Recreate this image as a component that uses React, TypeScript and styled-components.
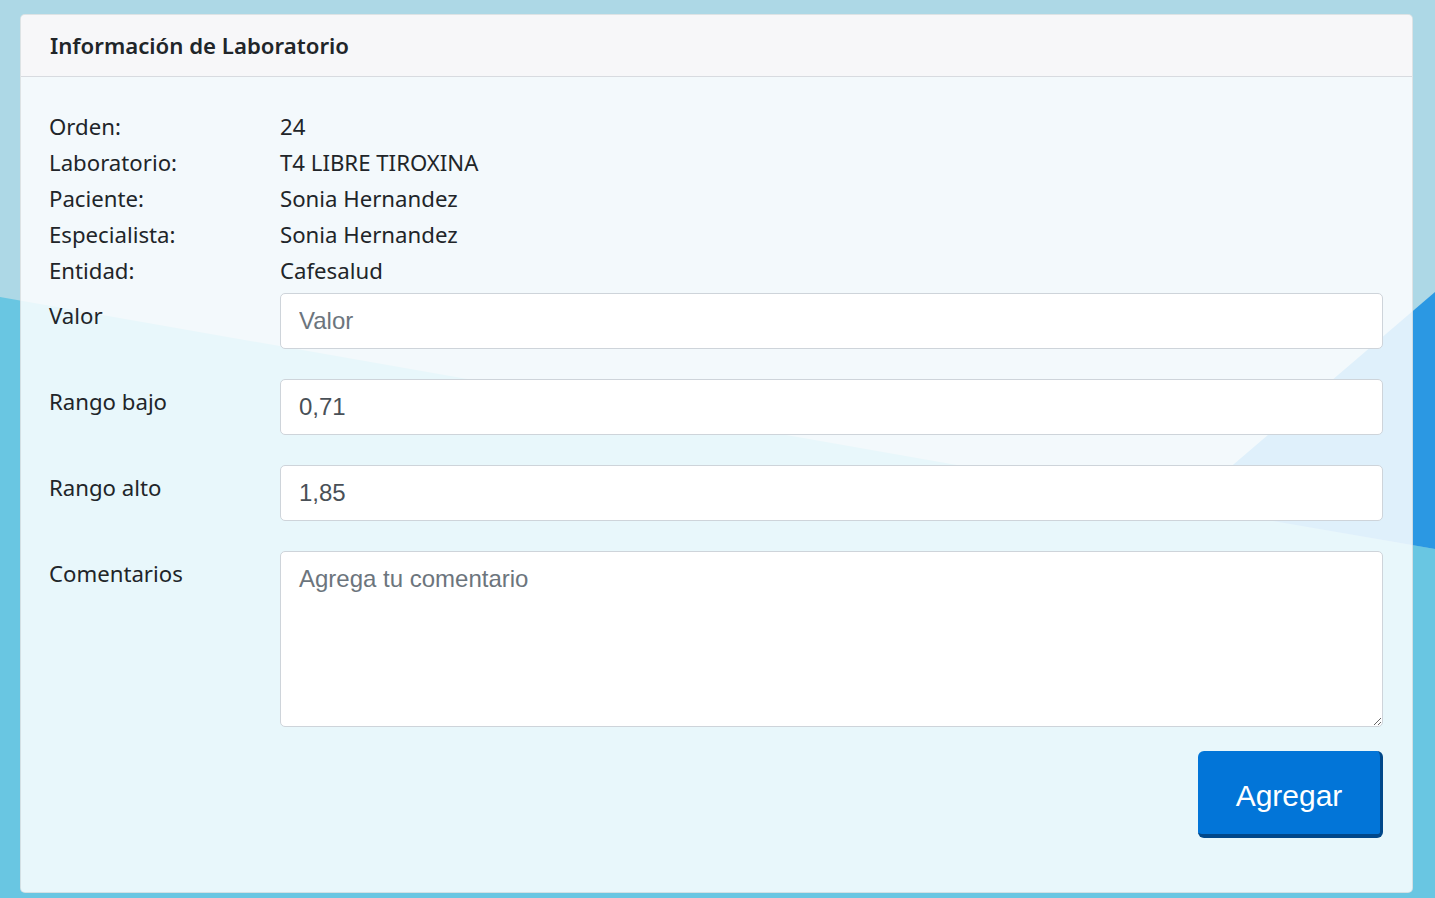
import React from "react";
import styled, { createGlobalStyle } from "styled-components";

const GlobalStyle = createGlobalStyle`
    html, body {
        margin: 0;
        padding: 0;
    }
    body {
        background-color: #add8e6;
        font-family: "Noto Sans", "Open Sans", sans-serif;
        color: #212529;
        overflow: hidden;
    }
`;

const Page = styled.div`
    position: relative;
    width: 1435px;
    height: 898px;
    box-sizing: border-box;
    padding: 14px 22px 0 20px;
    overflow: hidden;
    z-index: 0;

    /* decorative background shapes */
    &::before,
    &::after {
        content: "";
        position: absolute;
        inset: 0;
        z-index: -1;
    }
    &::before {
        background-color: #69c6e2;
        clip-path: polygon(0 297px, 1435px 549px, 1435px 898px, 0 898px);
    }
    &::after {
        background-color: #2b98e3;
        clip-path: polygon(1435px 292px, 1185px 506px, 1435px 549px);
    }
`;

const Card = styled.div`
    background-color: rgba(255, 255, 255, 0.85);
    border: 1px solid rgba(0, 0, 0, 0.09);
    border-radius: 5px;
    height: 879px;
    box-sizing: border-box;
    display: flex;
    flex-direction: column;
`;

const CardHeader = styled.div`
    height: 62px;
    box-sizing: border-box;
    display: flex;
    align-items: center;
    padding: 0 29px;
    background-color: #f7f7f9;
    border-bottom: 1px solid #d8dbe0;
    border-radius: 5px 5px 0 0;
    font-size: 22.2px;
    font-weight: 600;
`;

const CardBody = styled.div`
    padding: 32px 29px 0 28px;
    display: flex;
    flex-direction: column;
`;

const InfoList = styled.div`
    display: grid;
    grid-template-columns: 231px 1fr;
    font-size: 22.2px;
    line-height: 36px;
    margin-bottom: 4px;
`;

const FormRow = styled.div<{ $gap?: number }>`
    display: grid;
    grid-template-columns: 231px 1fr;
    margin-bottom: ${(p) => p.$gap ?? 30}px;
`;

const Label = styled.label`
    font-size: 22.2px;
    line-height: 36px;
    padding-top: 5px;
`;

const Input = styled.input`
    height: 56px;
    box-sizing: border-box;
    border: 1px solid #ced4da;
    border-radius: 5px;
    background: #fff;
    padding: 0 18px;
    font-family: "Liberation Sans", Arial, sans-serif;
    font-size: 24px;
    color: #495057;
    outline: none;
    &::placeholder {
        color: #6c757d;
    }
`;

const TextArea = styled.textarea`
    height: 176px;
    box-sizing: border-box;
    border: 1px solid #ced4da;
    border-radius: 5px;
    background: #fff;
    padding: 9px 18px;
    font-family: "Liberation Sans", Arial, sans-serif;
    font-size: 24px;
    line-height: 1.5;
    color: #495057;
    outline: none;
    resize: vertical;
    &::placeholder {
        color: #6c757d;
    }
`;

const Actions = styled.div`
    display: flex;
    justify-content: flex-end;
`;

const Button = styled.button`
    width: 185px;
    height: 87px;
    box-sizing: border-box;
    background-color: #0275d8;
    color: #fff;
    border: none;
    border-right: 3px solid #01488a;
    border-bottom: 4px solid #01488a;
    border-radius: 6px;
    font-family: "Liberation Sans", Arial, sans-serif;
    font-size: 30px;
    padding: 6px 0 0 0;
    cursor: pointer;
`;

const info = [
    ["Orden:", "24"],
    ["Laboratorio:", "T4 LIBRE TIROXINA"],
    ["Paciente:", "Sonia Hernandez"],
    ["Especialista:", "Sonia Hernandez"],
    ["Entidad:", "Cafesalud"],
];

const App = () => {
    return (
        <>
            <GlobalStyle />
            <Page>
                <Card>
                    <CardHeader>Información de Laboratorio</CardHeader>
                    <CardBody>
                        <InfoList>
                            {info.map(([k, v]) => (
                                <React.Fragment key={k}>
                                    <span>{k}</span>
                                    <span>{v}</span>
                                </React.Fragment>
                            ))}
                        </InfoList>
                        <FormRow>
                            <Label>Valor</Label>
                            <Input placeholder="Valor" />
                        </FormRow>
                        <FormRow>
                            <Label>Rango bajo</Label>
                            <Input defaultValue="0,71" />
                        </FormRow>
                        <FormRow>
                            <Label>Rango alto</Label>
                            <Input defaultValue="1,85" />
                        </FormRow>
                        <FormRow $gap={24}>
                            <Label>Comentarios</Label>
                            <TextArea placeholder="Agrega tu comentario" />
                        </FormRow>
                        <Actions>
                            <Button>Agregar</Button>
                        </Actions>
                    </CardBody>
                </Card>
            </Page>
        </>
    );
};

export default App;
